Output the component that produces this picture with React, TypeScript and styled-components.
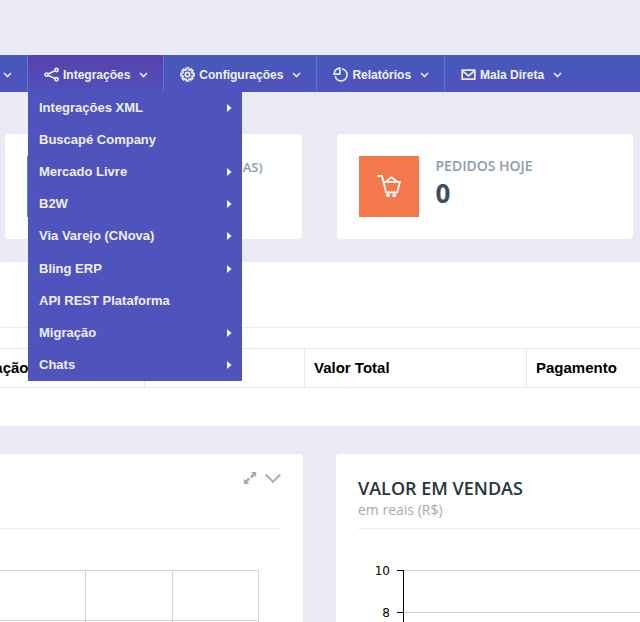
import React from "react";
import styled, { createGlobalStyle, css } from "styled-components";

const GlobalStyle = createGlobalStyle`
  *, *::before, *::after { box-sizing: border-box; }
  html { background: #eaeaf4; }
  body {
    margin: 0;
    overflow-x: hidden;
    background: #eaeaf4;
    font-family: "Open Sans", "Liberation Sans", sans-serif;
  }
`;

const Page = styled.div`
  display: flex;
  flex-direction: column;
  min-height: 100vh;
  padding-top: 55px;
  overflow: hidden;
`;

const Nav = styled.nav`
  display: flex;
  height: 37px;
  background: linear-gradient(#4559bc, #4f53bb);
`;

const NavItem = styled.div<{ $last?: boolean }>`
  position: relative;
  display: flex;
  border-right: ${(p) => (p.$last ? "0" : "1px solid #6073cd")};
`;

const NavButton = styled.button<{ $active?: boolean; $clipped?: boolean }>`
  display: flex;
  align-items: center;
  gap: 4px;
  padding: ${(p) => (p.$clipped ? "2px 15px 0 3px" : "2px 15px 0 16px")};
  border: 0;
  background: ${(p) => (p.$active ? "linear-gradient(#5a3fab, #4e53bb)" : "none")};
  color: #f0f1fb;
  font: bold 12px/16px "Liberation Sans", Arial, sans-serif;
  white-space: nowrap;
  cursor: pointer;
`;

const NavGlyph = styled.svg`
  width: 15px;
  height: 15px;
  flex: none;
  fill: none;
  stroke: #e9ebf9;
  stroke-width: 1.7;
`;

const Caret = styled.svg<{ $spaced?: boolean }>`
  width: 9px;
  height: 6px;
  flex: none;
  margin-left: ${(p) => (p.$spaced ? "5px" : "0")};
  fill: none;
  stroke: #e6e8f8;
  stroke-width: 1.7;
`;

const Menu = styled.ul`
  position: absolute;
  z-index: 10;
  top: 100%;
  left: 0;
  display: grid;
  grid-auto-rows: 1fr;
  width: 214px;
  min-height: 289px;
  margin: 0;
  padding: 0;
  list-style: none;
  background: #4e54bc;
`;

const MenuLink = styled.a`
  display: flex;
  align-items: center;
  justify-content: space-between;
  height: 100%;
  padding: 0 9px 0 11px;
  color: #eeeffa;
  font: bold 13px/16px "Liberation Sans", Arial, sans-serif;
  text-decoration: none;
`;

const MenuArrow = styled.svg`
  width: 5px;
  height: 8px;
  margin-right: 1px;
  fill: #fff;
`;

const Stats = styled.section`
  display: grid;
  grid-template-columns: 1fr 1fr;
  gap: 35px;
  padding: 42px 7px 23px 5px;
`;

const StatCard = styled.article`
  display: flex;
  gap: 17px;
  height: 105px;
  padding: 22px;
  border-radius: 4px;
  background: #fff;
`;

const StatIcon = styled.div<{ $color: string }>`
  width: 60px;
  height: 61px;
  flex: none;
  background: ${(p) => p.$color};
`;

const StatLabel = styled.h2<{ $compact?: boolean }>`
  margin: 0;
  color: #8b9dab;
  font-size: ${(p) => (p.$compact ? "13px" : "14px")};
  line-height: ${(p) => (p.$compact ? "22px" : "20px")};
  font-weight: 600;
  white-space: nowrap;
`;

const StatValue = styled.p`
  margin: 0;
  color: #3d4d5f;
  font-size: 26px;
  line-height: 34px;
  font-weight: 700;
`;

const Orders = styled.section`
  height: 164px;
  background: #fff;
`;

const OrdersHead = styled.div`
  height: 66px;
  margin-bottom: 20px;
  border-bottom: 1px solid #eceef0;
`;

const OrdersTable = styled.table`
  width: calc(100% + 104px);
  margin-left: -44px;
  border-collapse: collapse;
  table-layout: fixed;
`;

const HeaderCell = styled.th<{ $width?: number }>`
  width: ${(p) => (p.$width ? `${p.$width}px` : "auto")};
  height: 39px;
  padding: 0 9px;
  border: 1px solid #e4e9ee;
  color: #000;
  font: bold 15px/20px "Liberation Sans", Arial, sans-serif;
  text-align: left;
`;

const Charts = styled.section`
  display: grid;
  flex: 1;
  grid-template-columns: 303fr 304fr;
  gap: 33px;
  padding-top: 28px;
`;

const ChartPanel = styled.article<{ $side: "left" | "right" }>`
  background: #fff;
  ${(p) =>
    p.$side === "left"
      ? css`
          padding: 0 22px 0 0;
          border-radius: 0 4px 0 0;
        `
      : css`
          padding: 0 0 0 22px;
          border-radius: 4px 0 0 0;
        `}
`;

const PanelHead = styled.header`
  height: 75px;
  padding-top: 23px;
  border-bottom: 1px solid #eceef0;
`;

const PanelTitle = styled.h2`
  margin: 0;
  color: #2b333b;
  font-size: 18px;
  line-height: 23px;
  font-weight: 600;
  white-space: nowrap;
`;

const PanelSubtitle = styled.p`
  margin: 0;
  color: #a3adb5;
  font-size: 14px;
  line-height: 20px;
`;

const Tools = styled.div`
  display: flex;
  align-items: center;
  justify-content: flex-end;
  gap: 8px;
`;

const ToolButton = styled.button`
  display: flex;
  align-items: center;
  height: 14px;
  margin: -6px 0 0;
  padding: 0;
  border: 0;
  background: none;
  cursor: pointer;
`;

const Plot = styled.svg`
  display: block;
  width: 100%;
  height: 58px;
  margin-top: 35px;
  shape-rendering: crispEdges;
  text {
    fill: #000;
    font: 12px "DejaVu Sans", Verdana, sans-serif;
    text-anchor: end;
  }
`;

const gearPath = Array.from({ length: 8 }, (_, i) => {
  const at = (deg: number, r: number) => {
    const a = ((i * 45 + deg) * Math.PI) / 180;
    return `${(7.5 + r * Math.cos(a)).toFixed(2)} ${(7.5 + r * Math.sin(a)).toFixed(2)}`;
  };
  return `${i ? "L" : "M"}${at(-15, 5)}L${at(-10, 6.6)}L${at(10, 6.6)}L${at(15, 5)}`;
}).join("") + "Z";

const glyphs: Record<string, React.ReactNode> = {
  share: (
    <>
      <path d="M4.5 6.8 11 3.7M4.5 8.4 11 11.5" />
      <circle cx="2.6" cy="7.6" r="1.6" />
      <circle cx="12.5" cy="3" r="1.6" />
      <circle cx="12.5" cy="12.2" r="1.6" />
    </>
  ),
  gear: (
    <>
      <path d={gearPath} />
      <circle cx="7.5" cy="7.5" r="2.2" />
    </>
  ),
  pie: (
    <>
      <path d="M9 1.9A6 6 0 1 1 2.2 9.3" />
      <path d="M6.9 1.2V7.1H1.1A5.9 5.9 0 0 1 6.9 1.2Z" />
    </>
  ),
  mail: (
    <>
      <path d="M1.2 3.2H13.8V12.2H1.2Z" />
      <path d="M1.5 3.8 7.5 9 13.5 3.8" />
    </>
  ),
};

const DownCaret = ({ spaced }: { spaced?: boolean }) => (
  <Caret viewBox="0 0 9 6" $spaced={spaced} aria-hidden="true">
    <path d="M1 1 4.5 4.5 8 1" />
  </Caret>
);

const integrations = [
  { label: "Integrações XML", nested: true },
  { label: "Buscapé Company", nested: false },
  { label: "Mercado Livre", nested: true },
  { label: "B2W", nested: true },
  { label: "Via Varejo (CNova)", nested: true },
  { label: "Bling ERP", nested: true },
  { label: "API REST Plataforma", nested: false },
  { label: "Migração", nested: true },
  { label: "Chats", nested: true },
];

const sections = [
  { label: "Integrações", icon: "share", open: true },
  { label: "Configurações", icon: "gear", open: false },
  { label: "Relatórios", icon: "pie", open: false },
  { label: "Mala Direta", icon: "mail", open: false },
];

export default function App() {
  return (
    <>
      <GlobalStyle />
      <Page>
        <Nav>
          <NavItem>
            <NavButton $clipped aria-label="Menu">
              <DownCaret />
            </NavButton>
          </NavItem>
          {sections.map((s, i) => (
            <NavItem key={s.label} $last={i === sections.length - 1}>
              <NavButton $active={s.open} aria-expanded={s.open}>
                <NavGlyph viewBox="0 0 15 15" aria-hidden="true">
                  {glyphs[s.icon]}
                </NavGlyph>
                {s.label}
                <DownCaret spaced />
              </NavButton>
              {s.open && (
                <Menu>
                  {integrations.map((entry) => (
                    <li key={entry.label}>
                      <MenuLink href="#">
                        {entry.label}
                        {entry.nested && (
                          <MenuArrow viewBox="0 0 5 8" aria-hidden="true">
                            <path d="M0 0 4.5 4 0 8Z" />
                          </MenuArrow>
                        )}
                      </MenuLink>
                    </li>
                  ))}
                </Menu>
              )}
            </NavItem>
          ))}
        </Nav>

        <Stats>
          <StatCard>
            <StatIcon $color="#3f8fd0" />
            <StatLabel $compact>VISITAS DO MÊS (ÚNICAS)</StatLabel>
          </StatCard>
          <StatCard>
            <StatIcon $color="#f3784b">
              <svg width="60" height="61" viewBox="0 0 60 61" fill="none" stroke="#fff" strokeWidth="1.8" aria-hidden="true">
                <path d="M18.5 20H23L27 36.3H38.2L41 25.8H24.6" />
                <path d="M27 25.5 32.5 21.3 38 25.5" />
                <circle cx="29" cy="39.3" r="2" fill="#fff" stroke="none" />
                <circle cx="35.3" cy="39.3" r="2" fill="#fff" stroke="none" />
              </svg>
            </StatIcon>
            <div>
              <StatLabel>PEDIDOS HOJE</StatLabel>
              <StatValue>0</StatValue>
            </div>
          </StatCard>
        </Stats>

        <Orders>
          <OrdersHead />
          <OrdersTable>
            <thead>
              <tr>
                <HeaderCell $width={188}>Situação</HeaderCell>
                <HeaderCell $width={160} aria-label="Cliente" />
                <HeaderCell $width={222}>Valor Total</HeaderCell>
                <HeaderCell>Pagamento</HeaderCell>
              </tr>
            </thead>
          </OrdersTable>
        </Orders>

        <Charts>
          <ChartPanel $side="left">
            <PanelHead>
              <Tools>
                <ToolButton aria-label="Expandir">
                  <svg width="14" height="14" viewBox="0 0 14 14" fill="#a9a9a9" aria-hidden="true">
                    <path d="M8 1H13.2V6.2L11.5 4.6 8.6 7.5 6.9 5.8 9.7 2.8Z" />
                    <path d="M6 13H.8V7.8L2.5 9.4 5.4 6.5 7.1 8.2 4.3 11.2Z" />
                    <path d="M5.6 5.6 8.4 8.4" stroke="#fff" />
                  </svg>
                </ToolButton>
                <ToolButton aria-label="Recolher">
                  <svg width="16" height="12" viewBox="0 0 16 12" fill="none" stroke="#b0b0b0" strokeWidth="2.2" aria-hidden="true">
                    <path d="M.7 2.5 8 9.7 15.3 2.5" />
                  </svg>
                </ToolButton>
              </Tools>
            </PanelHead>
            <Plot viewBox="0 0 281 58" preserveAspectRatio="xMaxYMin slice" fill="none" stroke="#d4d4d4" aria-hidden="true">
              <path d="M0 6.5H258.5V58M85.5 6.5V58M172.5 6.5V58M0 56.5H258.5" />
            </Plot>
          </ChartPanel>
          <ChartPanel $side="right">
            <PanelHead>
              <PanelTitle>VALOR EM VENDAS</PanelTitle>
              <PanelSubtitle>em reais (R$)</PanelSubtitle>
            </PanelHead>
            <Plot role="img" aria-label="Valor em vendas">
              <line x1="46" x2="100%" y1="6.5" y2="6.5" stroke="#d4d4d4" />
              <line x1="46" x2="100%" y1="48.5" y2="48.5" stroke="#d4d4d4" />
              <path d="M39 6.5H45.5V58M39 48.5H45.5" fill="none" stroke="#000" />
              <text x="32" y="11">10</text>
              <text x="32" y="53">8</text>
            </Plot>
          </ChartPanel>
        </Charts>
      </Page>
    </>
  );
}
